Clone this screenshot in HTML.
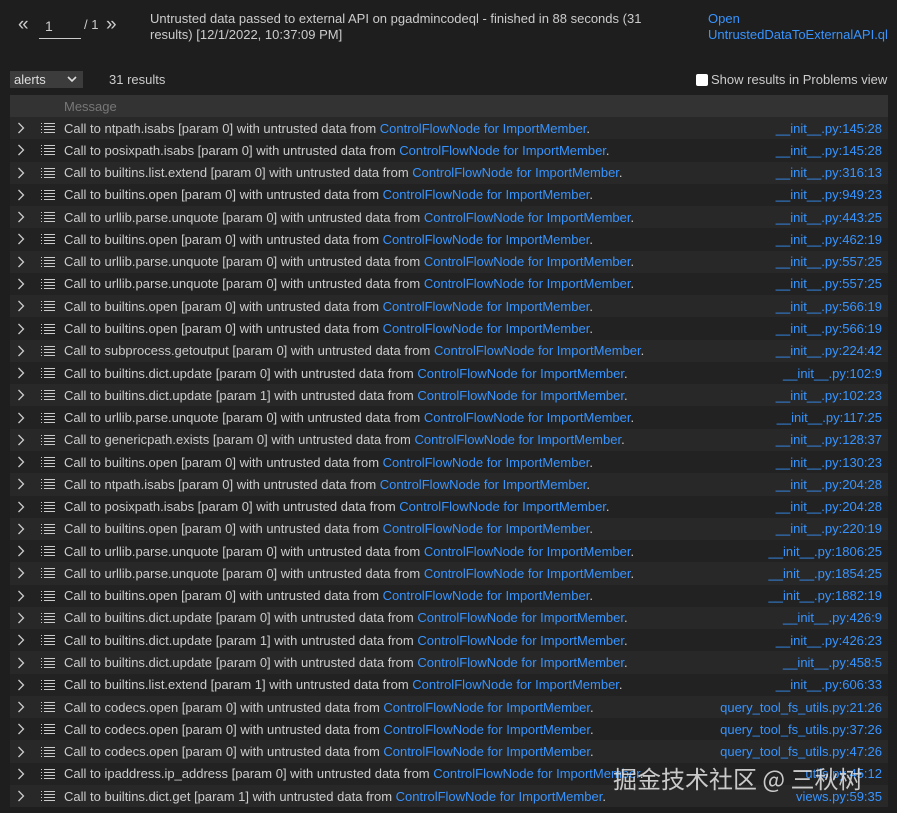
<!DOCTYPE html>
<html><head><meta charset="utf-8"><style>
body{margin:0;background:#1e1e1e;width:897px;height:813px;overflow:hidden;font-family:"Liberation Sans",sans-serif;color:#ccc;font-size:13px;position:relative}
a{color:#3794ff;text-decoration:none}
.pg{position:absolute;left:18px;top:14px;font-size:19px;color:#ccc}
.inp{position:absolute;left:39px;top:15px;width:42px;height:24px;border-bottom:1px solid #ccc;font-size:14px;line-height:22px;padding-left:6px;box-sizing:border-box}
.tot{position:absolute;left:84px;top:17px;font-size:13px}
.nx{position:absolute;left:106px;top:14px;font-size:19px}
.title{position:absolute;left:150px;top:11px;width:520px;line-height:16px}
.open{position:absolute;left:708px;top:11px;line-height:16px}
.sel{position:absolute;left:10px;top:71px;width:73px;height:17px;background:#3c3c3c;color:#ddd;line-height:17px;padding-left:4px;box-sizing:border-box}
.sel svg{position:absolute;right:6px;top:5px}
.cnt{position:absolute;left:109px;top:72px}
.chk{position:absolute;left:696px;top:72px}
.chk span{display:inline-block;width:12px;height:12px;background:#fff;border-radius:2px;vertical-align:-2px;margin-right:3px}
table{position:absolute;left:10px;top:95px;width:878px;border-collapse:collapse}
th{background:#333;height:22px;text-align:left;font-weight:normal;color:#777;padding:0}
td{height:22.27px;padding:0;white-space:nowrap;vertical-align:middle}
tr:nth-child(odd) td{background:#282828}
tr:nth-child(even) td{background:#222}
td.a{width:22px}
td.a svg,td.b svg{display:block;margin:0 auto}
td.b{width:32px}
td.r{text-align:right;padding-right:6px}
.wm{position:absolute;left:613px;top:760px;font-family:"Noto Sans CJK SC",sans-serif;font-size:24px;color:rgba(230,230,230,.85)}
</style></head><body>
<div class="pg">«</div><div class="inp">1</div><div class="tot">/ 1</div><div class="nx">»</div>
<div class="title">Untrusted data passed to external API on pgadmincodeql - finished in 88 seconds (31 results) [12/1/2022, 10:37:09 PM]</div>
<div class="open"><a>Open<br>UntrustedDataToExternalAPI.ql</a></div>
<div class="sel">alerts<svg width="10" height="7" viewBox="0 0 10 7"><path d="M1 1l4 4 4-4" stroke="#ddd" stroke-width="1.6" fill="none"/></svg></div>
<div class="cnt">31 results</div>
<div class="chk"><span></span>Show results in Problems view</div>
<table id="t"><tr><th></th><th></th><th>Message</th><th></th></tr></table>
<div class="wm">掘金技术社区 @ 三秋树</div>
<script>
var d=[["ntpath.isabs [param 0]","__init__.py:145:28"],["posixpath.isabs [param 0]","__init__.py:145:28"],["builtins.list.extend [param 0]","__init__.py:316:13"],["builtins.open [param 0]","__init__.py:949:23"],["urllib.parse.unquote [param 0]","__init__.py:443:25"],["builtins.open [param 0]","__init__.py:462:19"],["urllib.parse.unquote [param 0]","__init__.py:557:25"],["urllib.parse.unquote [param 0]","__init__.py:557:25"],["builtins.open [param 0]","__init__.py:566:19"],["builtins.open [param 0]","__init__.py:566:19"],["subprocess.getoutput [param 0]","__init__.py:224:42"],["builtins.dict.update [param 0]","__init__.py:102:9"],["builtins.dict.update [param 1]","__init__.py:102:23"],["urllib.parse.unquote [param 0]","__init__.py:117:25"],["genericpath.exists [param 0]","__init__.py:128:37"],["builtins.open [param 0]","__init__.py:130:23"],["ntpath.isabs [param 0]","__init__.py:204:28"],["posixpath.isabs [param 0]","__init__.py:204:28"],["builtins.open [param 0]","__init__.py:220:19"],["urllib.parse.unquote [param 0]","__init__.py:1806:25"],["urllib.parse.unquote [param 0]","__init__.py:1854:25"],["builtins.open [param 0]","__init__.py:1882:19"],["builtins.dict.update [param 0]","__init__.py:426:9"],["builtins.dict.update [param 1]","__init__.py:426:23"],["builtins.dict.update [param 0]","__init__.py:458:5"],["builtins.list.extend [param 1]","__init__.py:606:33"],["codecs.open [param 0]","query_tool_fs_utils.py:21:26"],["codecs.open [param 0]","query_tool_fs_utils.py:37:26"],["codecs.open [param 0]","query_tool_fs_utils.py:47:26"],["ipaddress.ip_address [param 0]","utils.py:45:12"],["builtins.dict.get [param 1]","views.py:59:35"]];
var chev='<svg width="8" height="12" viewBox="0 0 8 12"><path d="M1.5 1l5 5-5 5" stroke="#ccc" stroke-width="1.3" fill="none"/></svg>';
var lst='<svg width="16" height="12" viewBox="0 0 16 12"><path d="M1 1.5h1M1 4.5h1M1 7.5h1M1 10.5h1M4 1.5h11M4 4.5h11M4 7.5h11M4 10.5h11" stroke="#ccc" stroke-width="1"/></svg>';
var h='';d.forEach(function(r){h+='<tr><td class="a">'+chev+'</td><td class="b">'+lst+'</td><td>Call to '+r[0]+' with untrusted data from <a>ControlFlowNode for ImportMember</a>.</td><td class="r"><a>'+r[1]+'</a></td></tr>';});
document.getElementById('t').insertAdjacentHTML('beforeend',h);
</script>
</body></html>
